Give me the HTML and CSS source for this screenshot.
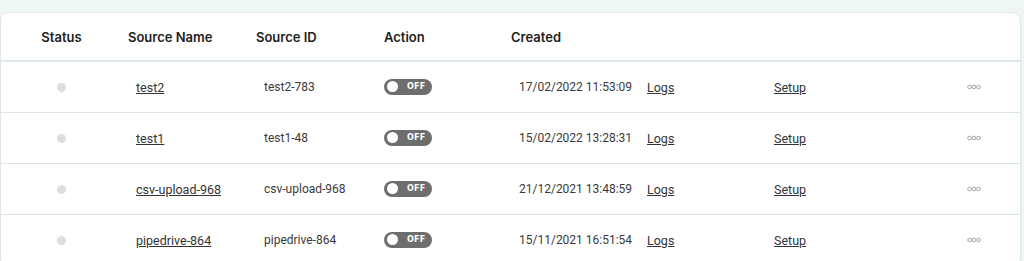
FILE: index.html
```html
<!DOCTYPE html>
<html>

<head>
	<meta charset='utf-8'>
	<title>Sources</title>
	<link rel="stylesheet" href="styles.css">
</head>

<body>
	<div class="card">
		<div class="row head">
			<div class="c-status">Status</div>
			<div>Source Name</div>
			<div>Source ID</div>
			<div>Action</div>
			<div>Created</div>
			<div></div>
			<div></div>
			<div></div>
		</div>
		<div class="row">
			<div class="c-status"><span class="dot"></span></div>
			<div class="cell"><a href="#">test2</a></div>
			<div class="cell">test2-783</div>
			<div><span class="toggle"><span class="knob"></span>OFF</span></div>
			<div class="cell">17/02/2022 11:53:09</div>
			<div class="cell"><a href="#">Logs</a></div>
			<div class="cell"><a href="#">Setup</a></div>
			<div class="c-more"><svg width="14" height="6" viewBox="0 0 14 6"><circle cx="2.5" cy="3" r="1.8"/><circle cx="7" cy="3" r="1.8"/><circle cx="11.5" cy="3" r="1.8"/></svg></div>
		</div>
		<div class="row">
			<div class="c-status"><span class="dot"></span></div>
			<div class="cell"><a href="#">test1</a></div>
			<div class="cell">test1-48</div>
			<div><span class="toggle"><span class="knob"></span>OFF</span></div>
			<div class="cell">15/02/2022 13:28:31</div>
			<div class="cell"><a href="#">Logs</a></div>
			<div class="cell"><a href="#">Setup</a></div>
			<div class="c-more"><svg width="14" height="6" viewBox="0 0 14 6"><circle cx="2.5" cy="3" r="1.8"/><circle cx="7" cy="3" r="1.8"/><circle cx="11.5" cy="3" r="1.8"/></svg></div>
		</div>
		<div class="row">
			<div class="c-status"><span class="dot"></span></div>
			<div class="cell"><a href="#">csv-upload-968</a></div>
			<div class="cell">csv-upload-968</div>
			<div><span class="toggle"><span class="knob"></span>OFF</span></div>
			<div class="cell">21/12/2021 13:48:59</div>
			<div class="cell"><a href="#">Logs</a></div>
			<div class="cell"><a href="#">Setup</a></div>
			<div class="c-more"><svg width="14" height="6" viewBox="0 0 14 6"><circle cx="2.5" cy="3" r="1.8"/><circle cx="7" cy="3" r="1.8"/><circle cx="11.5" cy="3" r="1.8"/></svg></div>
		</div>
		<div class="row">
			<div class="c-status"><span class="dot"></span></div>
			<div class="cell"><a href="#">pipedrive-864</a></div>
			<div class="cell">pipedrive-864</div>
			<div><span class="toggle"><span class="knob"></span>OFF</span></div>
			<div class="cell">15/11/2021 16:51:54</div>
			<div class="cell"><a href="#">Logs</a></div>
			<div class="cell"><a href="#">Setup</a></div>
			<div class="c-more"><svg width="14" height="6" viewBox="0 0 14 6"><circle cx="2.5" cy="3" r="1.8"/><circle cx="7" cy="3" r="1.8"/><circle cx="11.5" cy="3" r="1.8"/></svg></div>
		</div>
	</div>
</body>

</html>
```

FILE: styles.css
```css
body {
	margin: 0;
	padding: 12px 3px 0 0;
	background: #eef7f5;
	font: 12px Roboto, sans-serif;
	color: #3a3a3a;
	overflow: hidden;
}
.card {
	background: white;
	border: 1px solid #dfe7e5;
	border-radius: 8px;
	box-shadow: 0 1px 3px rgba(0, 0, 0, 0.05);
}
.row {
	display: grid;
	grid-template-columns: 127px 128px 128px 127px 128px 127px 121px 1fr;
	align-items: center;
	height: 50px;
	border-bottom: 1px solid #dbe4e3;
}
.head {
	height: 47px;
	border-bottom: 2px solid #dce9e6;
	font: 600 13px Inter, sans-serif;
	color: #1e1e1e;
}
.c-status {
	text-align: center;
	padding-right: 6px;
}
.cell {
	padding-left: 8px;
}
a {
	color: #333;
	font-size: 12.5px;
}
.dot {
	display: inline-block;
	width: 9px;
	height: 9px;
	border-radius: 50%;
	background: #dedede;
	vertical-align: middle;
}
.toggle {
	display: inline-flex;
	align-items: center;
	gap: 9px;
	width: 48px;
	height: 16px;
	box-sizing: border-box;
	padding-left: 3px;
	border-radius: 8px;
	background: #6e6e6e;
	color: white;
	font: bold 8px "DejaVu Sans", sans-serif;
	letter-spacing: 0.3px;
}
.knob {
	width: 11px;
	height: 11px;
	border-radius: 50%;
	background: white;
}
.c-more {
	padding-left: 80px;
	display: flex;
}
.c-more svg {
	fill: none;
	stroke: #9a9a9a;
	stroke-width: 0.9;
}
```
